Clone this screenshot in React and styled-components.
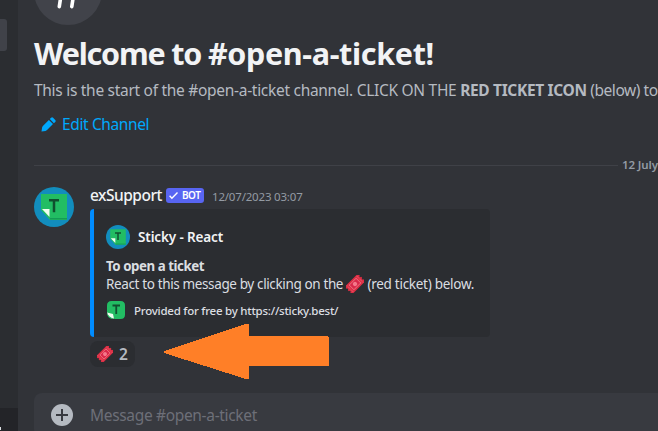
import React from "react";
import styled, { createGlobalStyle } from "styled-components";

const Global = createGlobalStyle`
  * { box-sizing: border-box; }
  html, body { margin: 0; height: 100%; overflow: hidden; background: #313338; }
  body { font-family: "Noto Sans", sans-serif; color: #dbdee1; }
  svg { display: block; flex: none; }
`;

const Window = styled.div`
  display: flex;
  width: 658px;
  height: 431px;
  overflow: hidden;
  position: relative;
`;

const Sidebar = styled.aside`
  flex: none;
  width: 18px;
  display: flex;
  flex-direction: column;
  justify-content: space-between;
  background: #2b2d31;
  padding-top: 19px;
`;

const SelectedChannel = styled.div`
  width: 7px;
  height: 32px;
  border-radius: 0 3px 3px 0;
  background: #404249;
`;

const UserPanel = styled.div`
  height: 23px;
  background: #232428;
  display: flex;
  align-items: flex-end;
  padding-bottom: 1px;
`;

const PanelMark = styled.span`
  width: 1px;
  height: 3px;
  background: #dbdee1;
`;

const Chat = styled.main`
  flex: 1;
  min-width: 0;
  padding-left: 16px;
  display: flex;
  flex-direction: column;
  overflow: hidden;
  background: #313338;
`;

const ChannelIcon = styled.div`
  flex: none;
  width: 68px;
  height: 68px;
  margin-top: -43px;
  border-radius: 50%;
  background: #41434a;
  display: flex;
  align-items: center;
  justify-content: center;
`;

const Text = styled.span`
  white-space: pre;
  font-size: ${(p) => p.$size}px;
  font-weight: ${(p) => p.$weight || 400};
  letter-spacing: ${(p) => p.$spacing || 0}px;
  color: ${(p) => p.$color || "#dbdee1"};
`;

const Title = styled.h1`
  flex: none;
  margin: 8px 0 0;
  height: 40px;
  line-height: 40px;
  font-size: 30.5px;
  font-weight: 700;
  letter-spacing: -1.2px;
  color: #f2f3f5;
  white-space: nowrap;
`;

const TitleChannel = styled.span`
  letter-spacing: -0.33px;
`;

const Description = styled.p`
  flex: none;
  margin: 7px 0 0;
  height: 20px;
  line-height: 20px;
  white-space: nowrap;
`;

const EditButton = styled.button`
  flex: none;
  align-self: flex-start;
  display: flex;
  align-items: center;
  gap: 6px;
  height: 32px;
  margin-top: 8px;
  padding: 0 7px;
  border: 0;
  background: none;
  font-family: inherit;
`;

const DateDivider = styled.div`
  flex: none;
  display: flex;
  align-items: center;
  height: 14px;
  margin-top: 18px;
  gap: 4px;
  line-height: 14px;
`;

const Rule = styled.span`
  flex: none;
  width: 584px;
  height: 1px;
  background: #3f4147;
`;

const Message = styled.article`
  flex: none;
  display: flex;
  align-items: flex-start;
  gap: 16px;
  margin-top: 15px;
`;

const Body = styled.div`
  display: flex;
  flex-direction: column;
  align-items: flex-start;
`;

const Header = styled.header`
  display: flex;
  align-items: center;
  height: 22px;
  padding-bottom: 2px;
  line-height: 20px;
`;

const BotBadge = styled.span`
  display: flex;
  align-items: center;
  gap: 4px;
  width: 38px;
  height: 15px;
  margin: -4px 8px 0 4px;
  padding-left: 3px;
  border-radius: 3px;
  background: #5865f2;
  line-height: 15px;
`;

const Username = styled.div`
  width: 72px;
  height: 20px;
  margin-top: -4px;
`;

const Embed = styled.section`
  width: 400px;
  height: 128px;
  padding: 16px 0 0 12px;
  border-left: 4px solid #008cff;
  border-radius: 4px;
  background: #2b2d31;
`;

const EmbedAuthor = styled.div`
  display: flex;
  align-items: center;
  gap: 8px;
  height: 24px;
`;

const EmbedLine = styled.div`
  display: flex;
  align-items: center;
  height: 18px;
  line-height: 18px;
  margin-top: ${(p) => p.$gap || 0}px;
`;

const EmbedFooter = styled.div`
  display: flex;
  align-items: center;
  gap: 8px;
  height: 20px;
  margin-top: 7px;
`;

const Reaction = styled.button`
  display: flex;
  align-items: center;
  gap: 6px;
  width: 45px;
  height: 26px;
  margin-top: 4px;
  padding: 0 0 0 7px;
  border: 0;
  border-radius: 8px;
  background: #2b2d31;
  font-family: inherit;
`;

const Composer = styled.footer`
  flex: none;
  display: flex;
  align-items: center;
  gap: 17px;
  height: 44px;
  margin-top: 26px;
  padding-left: 17px;
  border-radius: 8px 0 0 8px;
  background: #383a40;
`;

const ArrowOverlay = styled.svg`
  position: absolute;
  left: 163px;
  top: 323px;
`;

function HashIcon() {
  return (
    <svg width="44" height="44" viewBox="0 0 44 44" fill="none" stroke="#fff" strokeWidth="3.6" strokeLinecap="round">
      <path d="M18.5 3 13.3 37.6M31 3 25.8 37.6M7 14h31M5 26h31" />
    </svg>
  );
}

function PencilIcon() {
  return (
    <svg width="15" height="15" viewBox="0 0 15 15" fill="#00a8fc">
      <path d="m8.8 2.1 1.3-1.3q1-1 2 0l2.1 2.1q1 1 0 2l-1.3 1.3z" />
      <path d="m7.9 3 4.1 4.1-6 6q-.6.6-1.5.8L.5 14.5l.6-4q.2-.9.8-1.5z" />
    </svg>
  );
}

function StickyLogo({ size, round }) {
  return (
    <svg width={size} height={size} viewBox="0 0 40 40">
      {round && <circle cx="20" cy="20" r="20" fill="#128dbd" />}
      {round ? (
        <g>
          <path d="M7 7h26v26H16L7 23z" fill="#22bd63" />
          <path d="M16 31h17v1.5H16z" fill="#149b55" />
          <path d="M8 22h7.5v8z" fill="#f1fff0" />
          <path d="M15 13.2h10M20 13.2v12" stroke="#10502f" strokeWidth="2.5" fill="none" />
        </g>
      ) : (
        <g>
          <path d="M11 2h18q9 0 9 9v18q0 9-9 9H17L2 25V11q0-9 9-9z" fill="#22bd63" />
          <path d="M2 25l12 3 2 9.5Q4 37 2 25z" fill="#effff0" />
          <path d="M2 25q3 9 14 13Q2 39 2 25" fill="#22bd63" />
          <path d="M13 11h15M20.5 11v17" stroke="#10502f" strokeWidth="3.6" fill="none" />
        </g>
      )}
    </svg>
  );
}

function TicketIcon({ size }) {
  return (
    <svg width={size} height={size} viewBox="0 0 18 18">
      <g transform="rotate(-45 9 9)">
        <path d="M-.4 3.7h18.8v2.6q-1.1.2-1.1 1t1.1 1v1.4q-1.1.2-1.1 1t1.1 1v2.6H-.4v-2.6q1.1-.2 1.1-1t-1.1-1V8.3q1.1-.2 1.1-1t-1.1-1z" fill="#dd2e44" />
        <path d="M4.2 5.7h9.6v6.6H4.2z" fill="#d9294a" stroke="#f0808c" strokeWidth=".8" />
        <path d="M2.2 4.5v9M15.8 4.5v9" stroke="#f0808c" strokeWidth=".7" strokeDasharray="1 1" />
        <circle cx="9" cy="9" r="2.2" fill="#f4788a" />
      </g>
    </svg>
  );
}

function CheckIcon() {
  return (
    <svg width="9" height="9" viewBox="0 0 9 9" fill="none" stroke="#fff" strokeWidth="1.4">
      <path d="m.6 4.8 2.3 2.4L8.5 1.5" />
    </svg>
  );
}

function PlusIcon() {
  return (
    <svg width="22" height="22" viewBox="0 0 22 22">
      <circle cx="11" cy="11" r="11" fill="#b5bac1" />
      <path d="M11 5v12M5 11h12" stroke="#383a40" strokeWidth="2" />
    </svg>
  );
}

export default function App() {
  return (
    <Window>
      <Global />
      <Sidebar>
        <SelectedChannel />
        <UserPanel><PanelMark /></UserPanel>
      </Sidebar>
      <Chat>
        <ChannelIcon><HashIcon /></ChannelIcon>
        <Title>Welcome to <TitleChannel>#open-a-ticket!</TitleChannel></Title>
        <Description>
          <Text $size={15.5} $spacing={-0.29} $color="#b5bac1">This is the start of the #open-a-ticket channel. CLICK ON THE </Text>
          <Text $size={15.5} $spacing={-0.34} $weight={700} $color="#b5bac1">RED TICKET ICON</Text>
          <Text $size={15.5} $spacing={-0.45} $color="#b5bac1"> (below) to</Text>
        </Description>
        <EditButton>
          <PencilIcon />
          <Text $size={15.5} $spacing={-0.38} $color="#00a8fc">Edit Channel</Text>
        </EditButton>
        <DateDivider>
          <Rule />
          <Text $size={11.5} $weight={600} $spacing={-0.1} $color="#949ba4">12 July</Text>
        </DateDivider>
        <Message>
          <StickyLogo size={40} round />
          <Body>
            <Header>
              <Username><Text $size={15.5} $weight={500} $spacing={-0.5} $color="#f2f3f5">exSupport</Text></Username>
              <BotBadge>
                <CheckIcon />
                <Text $size={10} $weight={600} $spacing={-0.5} $color="#fff">BOT</Text>
              </BotBadge>
              <Text $size={11.5} $spacing={-0.19} $color="#949ba4">12/07/2023 03:07</Text>
            </Header>
            <Embed>
              <EmbedAuthor>
                <StickyLogo size={24} round />
                <Text $size={13.5} $weight={600} $spacing={-0.13} $color="#f2f3f5">Sticky - React</Text>
              </EmbedAuthor>
              <EmbedLine $gap={8}>
                <Text $size={13.3} $weight={700} $spacing={-0.45}>To open a ticket</Text>
              </EmbedLine>
              <EmbedLine>
                <Text $size={13.5} $spacing={-0.37}>React to this message by clicking on the </Text>
                <TicketIcon size={18} />
                <Text $size={13.5} $spacing={-0.28}> (red ticket) below.</Text>
              </EmbedLine>
              <EmbedFooter>
                <StickyLogo size={20} />
                <Text $size={11.5} $weight={500} $spacing={-0.24}>Provided for free by https://sticky.best/</Text>
              </EmbedFooter>
            </Embed>
            <Reaction>
              <TicketIcon size={16} />
              <Text $size={15.5} $weight={600} $color="#b5bac1">2</Text>
            </Reaction>
          </Body>
        </Message>
        <Composer>
          <PlusIcon />
          <Text $size={15.5} $spacing={-0.33} $color="#6d6f78">Message #open-a-ticket</Text>
        </Composer>
      </Chat>
      <ArrowOverlay width="167" height="57" viewBox="0 0 167 57" fill="#ff7f27" shapeRendering="crispEdges">
        <path d="M1 28 83 1h3v12h78l2 2v28H86v13h-3L1 30z" />
      </ArrowOverlay>
    </Window>
  );
}
